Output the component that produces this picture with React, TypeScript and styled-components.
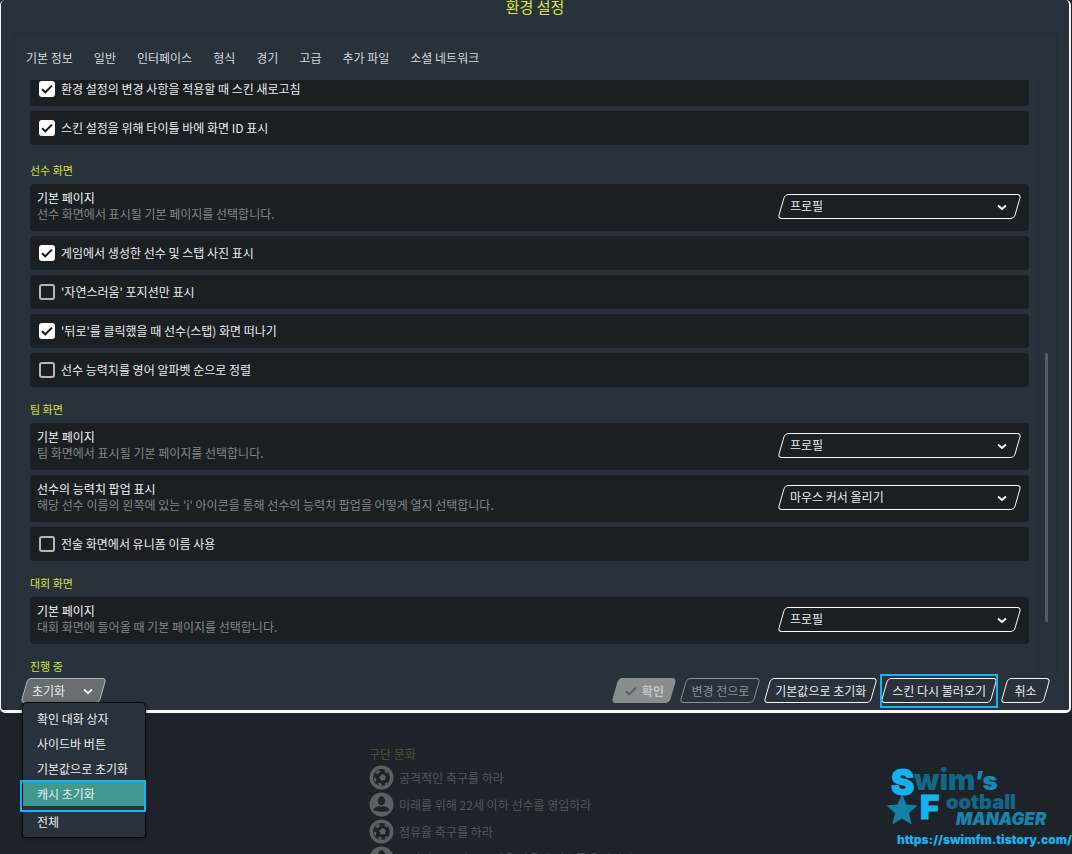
import React from 'react';
import styled, { createGlobalStyle, css } from 'styled-components';

const GlobalStyle = createGlobalStyle`
  *, *::before, *::after { box-sizing: border-box; }
  body {
    margin: 0;
    background: #1e232a;
    color: #e9ecee;
    font: 12px/16px "Noto Sans CJK KR", "Noto Sans", sans-serif;
  }
  button, select, input { font: inherit; color: inherit; margin: 0; }
  h1, h2, ul { margin: 0; padding: 0; font-weight: 400; list-style: none; }
`;

/* Slanted outline shared by buttons and drop-downs */
const slanted = css`
  position: relative;
  isolation: isolate;
  &::before {
    content: '';
    position: absolute;
    inset: 0;
    z-index: -1;
    border: 1px solid #f6f8f9;
    border-radius: 4px;
    transform: skewX(-16deg);
  }
`;

const Screen = styled.div`
  position: relative;
  min-height: 100vh;
  max-height: 100vh;
  overflow: hidden;
`;

const Dialog = styled.main`
  margin-right: 1px;
  background: #29313a;
  border: solid #f3f5f6;
  border-width: 0 2px 3px 1px;
  border-radius: 5px;
`;

const Title = styled.h1`
  color: #dce93e;
  font-size: 15px;
  line-height: 14px;
  text-align: center;
`;

const Frame = styled.section`
  margin: 19px 12px 0;
  border: 1px solid #262d35;
  border-bottom: 0;
`;

const Tabs = styled.nav`
  display: flex;
  gap: 21px;
  padding: 16px 12px 14px;
`;

const Tab = styled.a`
  color: #d3d7da;
  text-decoration: none;
`;

const Body = styled.div`
  display: flex;
  overflow: hidden;
`;

const List = styled.div`
  flex: 1;
  min-width: 0;
  margin-top: -8px;
  padding-left: 16px;
`;

const Group = styled.section`
  display: flex;
  flex-direction: column;
  gap: 5px;
  &:first-child { padding-bottom: 3px; }
`;

const GroupTitle = styled.h2`
  padding: 14px 0 1px;
  color: #d6e23c;
  font-size: 11px;
  line-height: 16px;
  &:last-child { padding-bottom: 3px; }
`;

const Row = styled.div`
  display: flex;
  align-items: center;
  justify-content: space-between;
  min-height: 47px;
  padding: 0 11px 3px 7px;
  background: #1a1f23;
  border-radius: 4px;
`;

const CheckRow = styled.label`
  display: flex;
  align-items: center;
  gap: 6px;
  min-height: 34px;
  padding: 0 9px;
  background: #1a1f23;
  border-radius: 4px;
`;

const CheckCell = styled.span`
  display: grid;
  place-items: center;
  > * { grid-area: 1 / 1; }
  svg { display: none; pointer-events: none; }
  input:checked + svg { display: block; }
`;

const CheckBox = styled.input`
  appearance: none;
  width: 16px;
  height: 16px;
  border: 2px solid #b4b8bb;
  border-radius: 3px;
  &:checked { background: #fff; border-color: #fff; }
`;

const Label = styled.label`
  display: block;
  color: #f4f6f7;
`;

const Hint = styled.span`
  display: block;
  color: #80868a;
`;

const SelectBox = styled.div`
  ${slanted}
  flex: none;
  width: 237px;
  height: 25px;
  svg { position: absolute; right: 11px; top: 8px; pointer-events: none; }
`;

const Select = styled.select`
  appearance: none;
  width: 100%;
  height: 100%;
  padding: 0 9px;
  border: 0;
  background: transparent;
  outline: 0;
`;

const Track = styled.div`
  display: grid;
  grid-template-rows: 273fr 269fr 55fr;
  margin-left: 9px;
  padding: 0 8px 0 6px;
  border-left: 1px solid #262d35;
`;

const Thumb = styled.div`
  grid-row: 2;
  width: 3px;
  border-radius: 2px;
  background: #555c64;
`;

const Footer = styled.footer`
  display: flex;
  align-items: center;
  justify-content: space-between;
  padding: 1px 22px 7px 23px;
`;

const Actions = styled.div`
  display: flex;
  gap: 10px;
`;

const Button = styled.button<{ $tone?: 'outline' | 'muted' | 'filled' | 'open' }>`
  ${slanted}
  display: flex;
  align-items: center;
  justify-content: center;
  gap: 5px;
  height: 25px;
  min-width: 43px;
  padding: 0 8px;
  border: 0;
  background: none;
  white-space: nowrap;
  ${p => p.$tone === 'muted' && css`
    color: #8c9296;
    &::before { border-color: #8a9094; }
  `}
  ${p => p.$tone === 'filled' && css`
    min-width: 58px;
    color: #c3c7c9;
    font-weight: 700;
    &::before { border-color: #888d90; background: #888d90; }
  `}
  ${p => p.$tone === 'open' && css`
    justify-content: space-between;
    width: 79px;
    padding-right: 10px;
    &::before { border-color: #b3b8ba; background: #676d71; }
  `}
`;

const Marked = styled.div`
  position: relative;
  &::after {
    content: '';
    position: absolute;
    inset: -4px -4px -5px;
    border: 2px solid #0fb4fb;
    pointer-events: none;
  }
`;

const MenuAnchor = styled.div`
  position: relative;
`;

const Menu = styled.ul`
  position: absolute;
  z-index: 2;
  top: 24px;
  left: -2px;
  width: 124px;
  padding: 3px 0;
  border: 1px solid #07090b;
  border-radius: 4px;
  background: #29313a;
  box-shadow: 0 1px 3px rgba(0, 0, 0, 0.5);
`;

const MenuItem = styled.li<{ $active?: boolean }>`
  position: relative;
  button {
    display: block;
    width: 100%;
    height: 25px;
    padding: 0 14px;
    border: 0;
    background: ${p => (p.$active ? '#40998f' : 'none')};
    text-align: left;
    white-space: nowrap;
  }
  ${p => p.$active && css`
    margin-bottom: 3px;
    &::after {
      content: '';
      position: absolute;
      inset: -1px -1px -6px -3px;
      border: 2px solid #0fb4fb;
      pointer-events: none;
    }
  `}
`;

const Backdrop = styled.aside`
  padding: 33px 0 0 369px;
  color: #51575c;
`;

const BackdropTitle = styled.h2`
  margin-bottom: 2px;
  color: #4d5628;
  font-size: 12px;
`;

const Goal = styled.li`
  display: flex;
  align-items: center;
  gap: 5px;
  height: 27px;
  white-space: nowrap;
`;

const Logo = styled.a`
  position: absolute;
  right: 0;
  bottom: 0;
  width: 192px;
  height: 92px;
  svg { display: block; }
`;

const Chevron = () => (
  <svg width="10" height="10" viewBox="0 0 10 10" fill="none" stroke="#f4f6f7" strokeWidth="2">
    <path d="M1 3.5 5 7l4-3.5" />
  </svg>
);

const Tick = ({ color = '#15191c', size = 12 }: { color?: string; size?: number }) => (
  <svg width={size} height={size} viewBox="0 0 12 12" fill="none" stroke={color} strokeWidth="2">
    <path d="M1 6.2 4.3 9.3 11 2.6" />
  </svg>
);

const BallIcon = () => (
  <svg width="25" height="25" viewBox="0 0 25 25">
    <circle cx="12.5" cy="12.5" r="12" fill="#5b6065" />
    <circle cx="12.5" cy="12.5" r="8.5" fill="#1e232a" />
    <g fill="#5b6065">
      <path d="m13.5 9 3.4 2.2-1 3.9-4 .5-1.7-3.6z" />
      <path d="m6 8 3-3 2.4 1.2L9 9z" />
      <path d="m4.7 12.5 2.6 1-.3 3.5-1.5-1z" />
      <path d="m9 17.5 3.5 1 .6 2.3-3-.4z" />
      <path d="m18 17.3-2 .9.3 1.7 2-1.5z" />
      <path d="m16 4.8 3 2.5-.6 1.2-3-1.7z" />
    </g>
  </svg>
);

const PersonIcon = () => (
  <svg width="25" height="25" viewBox="0 0 25 25">
    <circle cx="12.5" cy="12.5" r="12" fill="#5b6065" />
    <ellipse cx="12.5" cy="8.8" rx="3.6" ry="4.6" fill="#1e232a" />
    <path d="M4.5 18.5c0-3 3.5-3.8 6-4.5l2 1 2-1c2.500.7 6 1.5 6 4.5-2 1.6-14 1.6-16 0z" fill="#1e232a" />
  </svg>
);

const Check = ({ text, on }: { text: string; on?: boolean }) => (
  <CheckRow>
    <CheckCell>
      <CheckBox type="checkbox" defaultChecked={on} />
      <Tick />
    </CheckCell>
    {text}
  </CheckRow>
);

const Choice = ({ id, label, hint, value }: { id: string; label: string; hint: string; value: string }) => (
  <Row>
    <div>
      <Label htmlFor={id}>{label}</Label>
      <Hint>{hint}</Hint>
    </div>
    <SelectBox>
      <Select id={id} defaultValue={value}>
        <option>{value}</option>
      </Select>
      <Chevron />
    </SelectBox>
  </Row>
);

const tabs = ['기본 정보', '일반', '인터페이스', '형식', '경기', '고급', '추가 파일', '소셜 네트워크'];
const resetItems = ['확인 대화 상자', '사이드바 버튼', '기본값으로 초기화', '캐시 초기화', '전체'];

export default function App() {
  return (
    <Screen>
      <GlobalStyle />
      <Dialog>
        <Title>환경 설정</Title>
        <Frame>
          <Tabs>
            {tabs.map(t => <Tab key={t} href="#">{t}</Tab>)}
          </Tabs>
          <Body>
            <List>
              <Group>
                <Check on text="환경 설정의 변경 사항을 적용할 때 스킨 새로고침" />
                <Check on text="스킨 설정을 위해 타이틀 바에 화면 ID 표시" />
              </Group>
              <Group>
                <GroupTitle>선수 화면</GroupTitle>
                <Choice id="player-page" label="기본 페이지" hint="선수 화면에서 표시될 기본 페이지를 선택합니다." value="프로필" />
                <Check on text="게임에서 생성한 선수 및 스탭 사진 표시" />
                <Check text="'자연스러움' 포지션만 표시" />
                <Check on text="'뒤로'를 클릭했을 때 선수(스탭) 화면 떠나기" />
                <Check text="선수 능력치를 영어 알파벳 순으로 정렬" />
              </Group>
              <Group>
                <GroupTitle>팀 화면</GroupTitle>
                <Choice id="team-page" label="기본 페이지" hint="팀 화면에서 표시될 기본 페이지를 선택합니다." value="프로필" />
                <Choice id="attribute-popup" label="선수의 능력치 팝업 표시" hint="해당 선수 이름의 왼쪽에 있는 'i' 아이콘을 통해 선수의 능력치 팝업을 어떻게 열지 선택합니다." value="마우스 커서 올리기" />
                <Check text="전술 화면에서 유니폼 이름 사용" />
              </Group>
              <Group>
                <GroupTitle>대회 화면</GroupTitle>
                <Choice id="competition-page" label="기본 페이지" hint="대회 화면에 들어올 때 기본 페이지를 선택합니다." value="프로필" />
              </Group>
              <Group>
                <GroupTitle>진행 중</GroupTitle>
              </Group>
            </List>
            <Track><Thumb /></Track>
          </Body>
        </Frame>
        <Footer>
          <MenuAnchor>
            <Button type="button" $tone="open">초기화<Chevron /></Button>
            <Menu>
              {resetItems.map(t => (
                <MenuItem key={t} $active={t === '캐시 초기화'}>
                  <button type="button">{t}</button>
                </MenuItem>
              ))}
            </Menu>
          </MenuAnchor>
          <Actions>
            <Button type="button" $tone="filled"><Tick color="#5a6064" />확인</Button>
            <Button type="button" $tone="muted">변경 전으로</Button>
            <Button type="button">기본값으로 초기화</Button>
            <Marked><Button type="button">스킨 다시 불러오기</Button></Marked>
            <Button type="button">취소</Button>
          </Actions>
        </Footer>
      </Dialog>
      <Backdrop>
        <BackdropTitle>구단 문화</BackdropTitle>
        <ul>
          <Goal><BallIcon />공격적인 축구를 하라</Goal>
          <Goal><PersonIcon />미래를 위해 22세 이하 선수를 영입하라</Goal>
          <Goal><BallIcon />점유율 축구를 하라</Goal>
          <Goal><PersonIcon />구단의 유소년 시스템을 사용해 선수를 육성하라</Goal>
        </ul>
      </Backdrop>
      <Logo href="#">
        <svg width="192" height="92" viewBox="0 0 192 92" fontFamily="Inter, sans-serif" fontWeight="900">
          <path d="m22 32 4.5 10.500 11 1-8.500 7.500 2.700 11.500L22 56.500l-9.700 6 2.700-11.500-8.500-7.500 11-1z" fill="#1280a8" />
          <text x="34" y="28" fontSize="29" fill="#126789">wim</text>
          <text x="95" y="28" fontSize="26" fill="#128ab5">’s</text>
          <text x="11" y="33" fontSize="35" fill="#16b2ee" stroke="#16b2ee" strokeWidth="1">S</text>
          <text x="40" y="57" fontSize="33" fill="#16b2ee" stroke="#16b2ee" strokeWidth="1">F</text>
          <text x="66" y="47" fontSize="20" fill="#126789">ootball</text>
          <text x="76" y="63" fontSize="17" fill="#1585b0" fontStyle="italic">MANAGER</text>
          <text x="17" y="82" fontSize="12" fill="#16b2ee">https://swimfm.tistory.com/</text>
        </svg>
      </Logo>
    </Screen>
  );
}
